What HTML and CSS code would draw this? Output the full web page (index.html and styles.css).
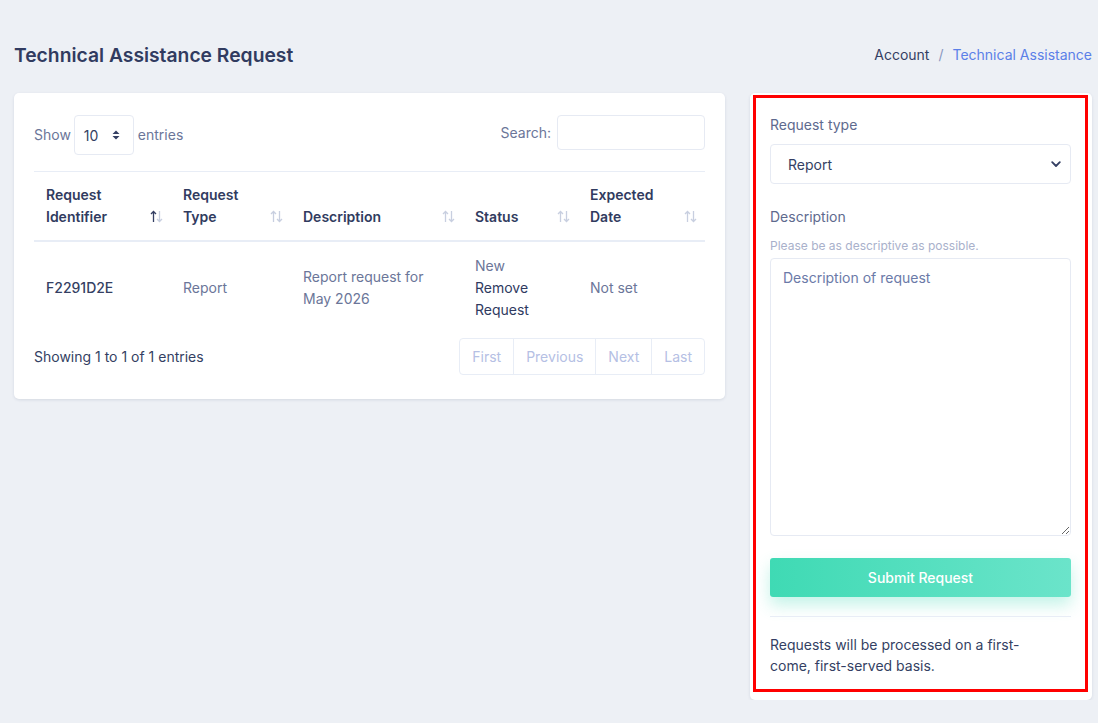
FILE: index.html
```html
<!DOCTYPE html>
<html lang="en">
<head>
    <meta charset="UTF-8">
    <meta name="viewport" content="width=device-width, initial-scale=1.0">
    <title>Technical Assistance Request</title>
    <link rel="stylesheet" href="styles.css">
</head>
<body>
    <div class="page-head">
        <h1>Technical Assistance Request</h1>
        <div class="crumbs">
            <span>Account</span>
            <span class="sep">/</span>
            <span class="current">Technical Assistance</span>
        </div>
    </div>

    <div class="layout">
        <div class="card list-card">
            <div class="table-tools">
                <label class="length">
                    Show
                    <span class="length-select">
                        10
                        <svg width="8" height="10" viewBox="0 0 8 10"><path d="M4 0.5 L7.5 4 H0.5 Z M4 9.5 L7.5 6 H0.5 Z" fill="#343f63"/></svg>
                    </span>
                    entries
                </label>
                <label class="search">
                    Search:
                    <input type="text">
                </label>
            </div>

            <table class="requests">
                <thead>
                    <tr>
                        <th class="c1"><span>Request<br>Identifier</span><svg class="sort asc" width="13" height="13" viewBox="0 0 13 13"><path class="up" d="M3.5 12 V1.5 M1 4 L3.5 1.5 L6 4"/><path class="down" d="M9.5 1 V11.5 M7 9 L9.5 11.5 L12 9"/></svg></th>
                        <th class="c2"><span>Request<br>Type</span><svg class="sort" width="13" height="13" viewBox="0 0 13 13"><path class="up" d="M3.5 12 V1.5 M1 4 L3.5 1.5 L6 4"/><path class="down" d="M9.5 1 V11.5 M7 9 L9.5 11.5 L12 9"/></svg></th>
                        <th class="c3"><span>Description</span><svg class="sort" width="13" height="13" viewBox="0 0 13 13"><path class="up" d="M3.5 12 V1.5 M1 4 L3.5 1.5 L6 4"/><path class="down" d="M9.5 1 V11.5 M7 9 L9.5 11.5 L12 9"/></svg></th>
                        <th class="c4"><span>Status</span><svg class="sort" width="13" height="13" viewBox="0 0 13 13"><path class="up" d="M3.5 12 V1.5 M1 4 L3.5 1.5 L6 4"/><path class="down" d="M9.5 1 V11.5 M7 9 L9.5 11.5 L12 9"/></svg></th>
                        <th class="c5"><span>Expected<br>Date</span><svg class="sort" width="13" height="13" viewBox="0 0 13 13"><path class="up" d="M3.5 12 V1.5 M1 4 L3.5 1.5 L6 4"/><path class="down" d="M9.5 1 V11.5 M7 9 L9.5 11.5 L12 9"/></svg></th>
                    </tr>
                </thead>
                <tbody>
                    <tr>
                        <td class="strong">F2291D2E</td>
                        <td>Report</td>
                        <td>Report request for May 2026</td>
                        <td>New<br><a class="remove">Remove<br>Request</a></td>
                        <td>Not set</td>
                    </tr>
                </tbody>
            </table>

            <div class="table-foot">
                <div class="info">Showing 1 to 1 of 1 entries</div>
                <div class="pager">
                    <span>First</span>
                    <span>Previous</span>
                    <span>Next</span>
                    <span>Last</span>
                </div>
            </div>
        </div>

        <div class="card form-card">
            <form class="request-form">
                <label class="field-label">Request type</label>
                <div class="select">
                    <span>Report</span>
                    <svg width="10" height="7" viewBox="0 0 10 7"><path d="M1.2 1.2 L5 5 L8.8 1.2" fill="none" stroke="#343f63" stroke-width="1.8" stroke-linecap="round" stroke-linejoin="round"/></svg>
                </div>

                <label class="field-label desc-label">Description</label>
                <div class="hint">Please be as descriptive as possible.</div>
                <textarea placeholder="Description of request"></textarea>

                <button type="button">Submit Request</button>

                <hr>
                <p class="note">Requests will be processed on a first-come, first-served basis.</p>
            </form>
        </div>
    </div>
</body>
</html>
```

FILE: styles.css
```css
body {
    margin: 0;
    padding: 0 6px 0 14px;
    background: #edf0f5;
    font-family: Inter, "Noto Sans", sans-serif;
    font-size: 14px;
    color: #343f63;
}
.page-head {
    display: flex;
    justify-content: space-between;
    align-items: center;
    height: 93px;
    padding-top: 16px;
    box-sizing: border-box;
}
h1 {
    margin: 0;
    font-size: 19.3px;
    font-weight: 600;
    color: #313b60;
}
.crumbs {
    display: flex;
    gap: 9px;
    font-size: 14px;
    color: #343f63;
}
.crumbs .sep {
    color: #8a97c0;
}
.crumbs .current {
    color: #5b7fe8;
}
.layout {
    display: flex;
    align-items: flex-start;
    gap: 25px;
}
.card {
    background: #fff;
    border-radius: 5px;
    box-shadow: 0 1px 3px rgba(40, 55, 100, 0.12);
}
.list-card {
    width: 711px;
    padding: 22px 20px 24px;
    box-sizing: border-box;
}
.table-tools {
    display: flex;
    justify-content: space-between;
    align-items: center;
    color: #6b7699;
}
.length, .search {
    display: flex;
    align-items: center;
}
.length {
    margin-top: -1px;
}
.length-select {
    display: flex;
    align-items: center;
    justify-content: space-between;
    width: 60px;
    height: 40px;
    margin: 1px 4px 0 3px;
    padding: 0 13px 0 9px;
    box-sizing: border-box;
    border: 1px solid #e6eaf3;
    border-radius: 4px;
    color: #343f63;
}
.search {
    gap: 6px;
    margin-bottom: 5px;
}
.search input {
    width: 148px;
    height: 35px;
    box-sizing: border-box;
    border: 1px solid #e6eaf3;
    border-radius: 4px;
    outline: none;
}
.requests {
    width: 100%;
    margin-top: 16px;
    border-collapse: collapse;
    table-layout: fixed;
}
.requests th {
    position: relative;
    box-sizing: border-box;
    padding: 12px;
    border-top: 1px solid #e8edf6;
    border-bottom: 2px solid #e8edf6;
    text-align: left;
    vertical-align: bottom;
    font-weight: 600;
    line-height: 22px;
    color: #313b60;
}
.requests .c1 { width: 137px; }
.requests .c2 { width: 120px; }
.requests .c3 { width: 172px; }
.requests .c4 { width: 115px; }
.sort {
    position: absolute;
    right: 8px;
    bottom: 17px;
    fill: none;
    stroke: #c8cfe0;
    stroke-width: 1.3;
}
.sort.asc .up {
    stroke: #343f63;
}
.requests td {
    padding: 13px 12px 12px;
    vertical-align: middle;
    line-height: 22px;
    color: #6b7699;
}
.requests td.strong {
    color: #343f63;
    font-weight: 500;
}
.remove {
    color: #2f3a5f;
}
.table-foot {
    display: flex;
    justify-content: space-between;
    align-items: center;
    margin-top: 5px;
}
.info {
    color: #343f63;
}
.pager {
    display: flex;
    border: 1px solid #e8edf6;
    border-radius: 4px;
}
.pager span {
    padding: 0 12px;
    line-height: 35px;
    color: #b5c0e4;
    border-left: 1px solid #e8edf6;
}
.pager span:first-child {
    border-left: none;
}
.form-card {
    width: 342px;
    padding: 2px 4px 8px 3px;
    box-sizing: border-box;
}
.request-form {
    display: flex;
    flex-direction: column;
    border: 3px solid #ff0000;
    padding: 16px 14px 13px;
}
.field-label {
    color: #5e6a8e;
    line-height: 21px;
    margin-bottom: 9px;
}
.select {
    display: flex;
    justify-content: space-between;
    align-items: center;
    height: 40px;
    box-sizing: border-box;
    padding: 0 9px 0 17px;
    border: 1px solid #e6eaf3;
    border-radius: 4px;
    color: #343f63;
}
.desc-label {
    margin-top: 22px;
    margin-bottom: 11px;
}
.hint {
    font-size: 12px;
    color: #a9b1cb;
    line-height: 16px;
    margin-bottom: 4px;
}
textarea {
    height: 278px;
    padding: 10px 12px;
    box-sizing: border-box;
    border: 1px solid #e6eaf3;
    border-radius: 4px;
    font-family: inherit;
    font-size: 14px;
    resize: vertical;
    outline: none;
}
textarea::placeholder {
    color: #6b7aa8;
}
button {
    height: 39px;
    margin-top: 22px;
    border: none;
    border-radius: 3px;
    background: linear-gradient(90deg, #3fdab4, #6be4ca);
    box-shadow: 0 8px 16px rgba(60, 215, 178, 0.3);
    color: #fff;
    font-family: inherit;
    font-size: 14px;
    font-weight: 500;
}
hr {
    width: 100%;
    margin: 19px 0 0;
    border: none;
    border-top: 1px solid #e8edf6;
}
.note {
    max-width: 280px;
    margin: 17px 0 0;
    line-height: 21px;
    color: #343f63;
}
```
